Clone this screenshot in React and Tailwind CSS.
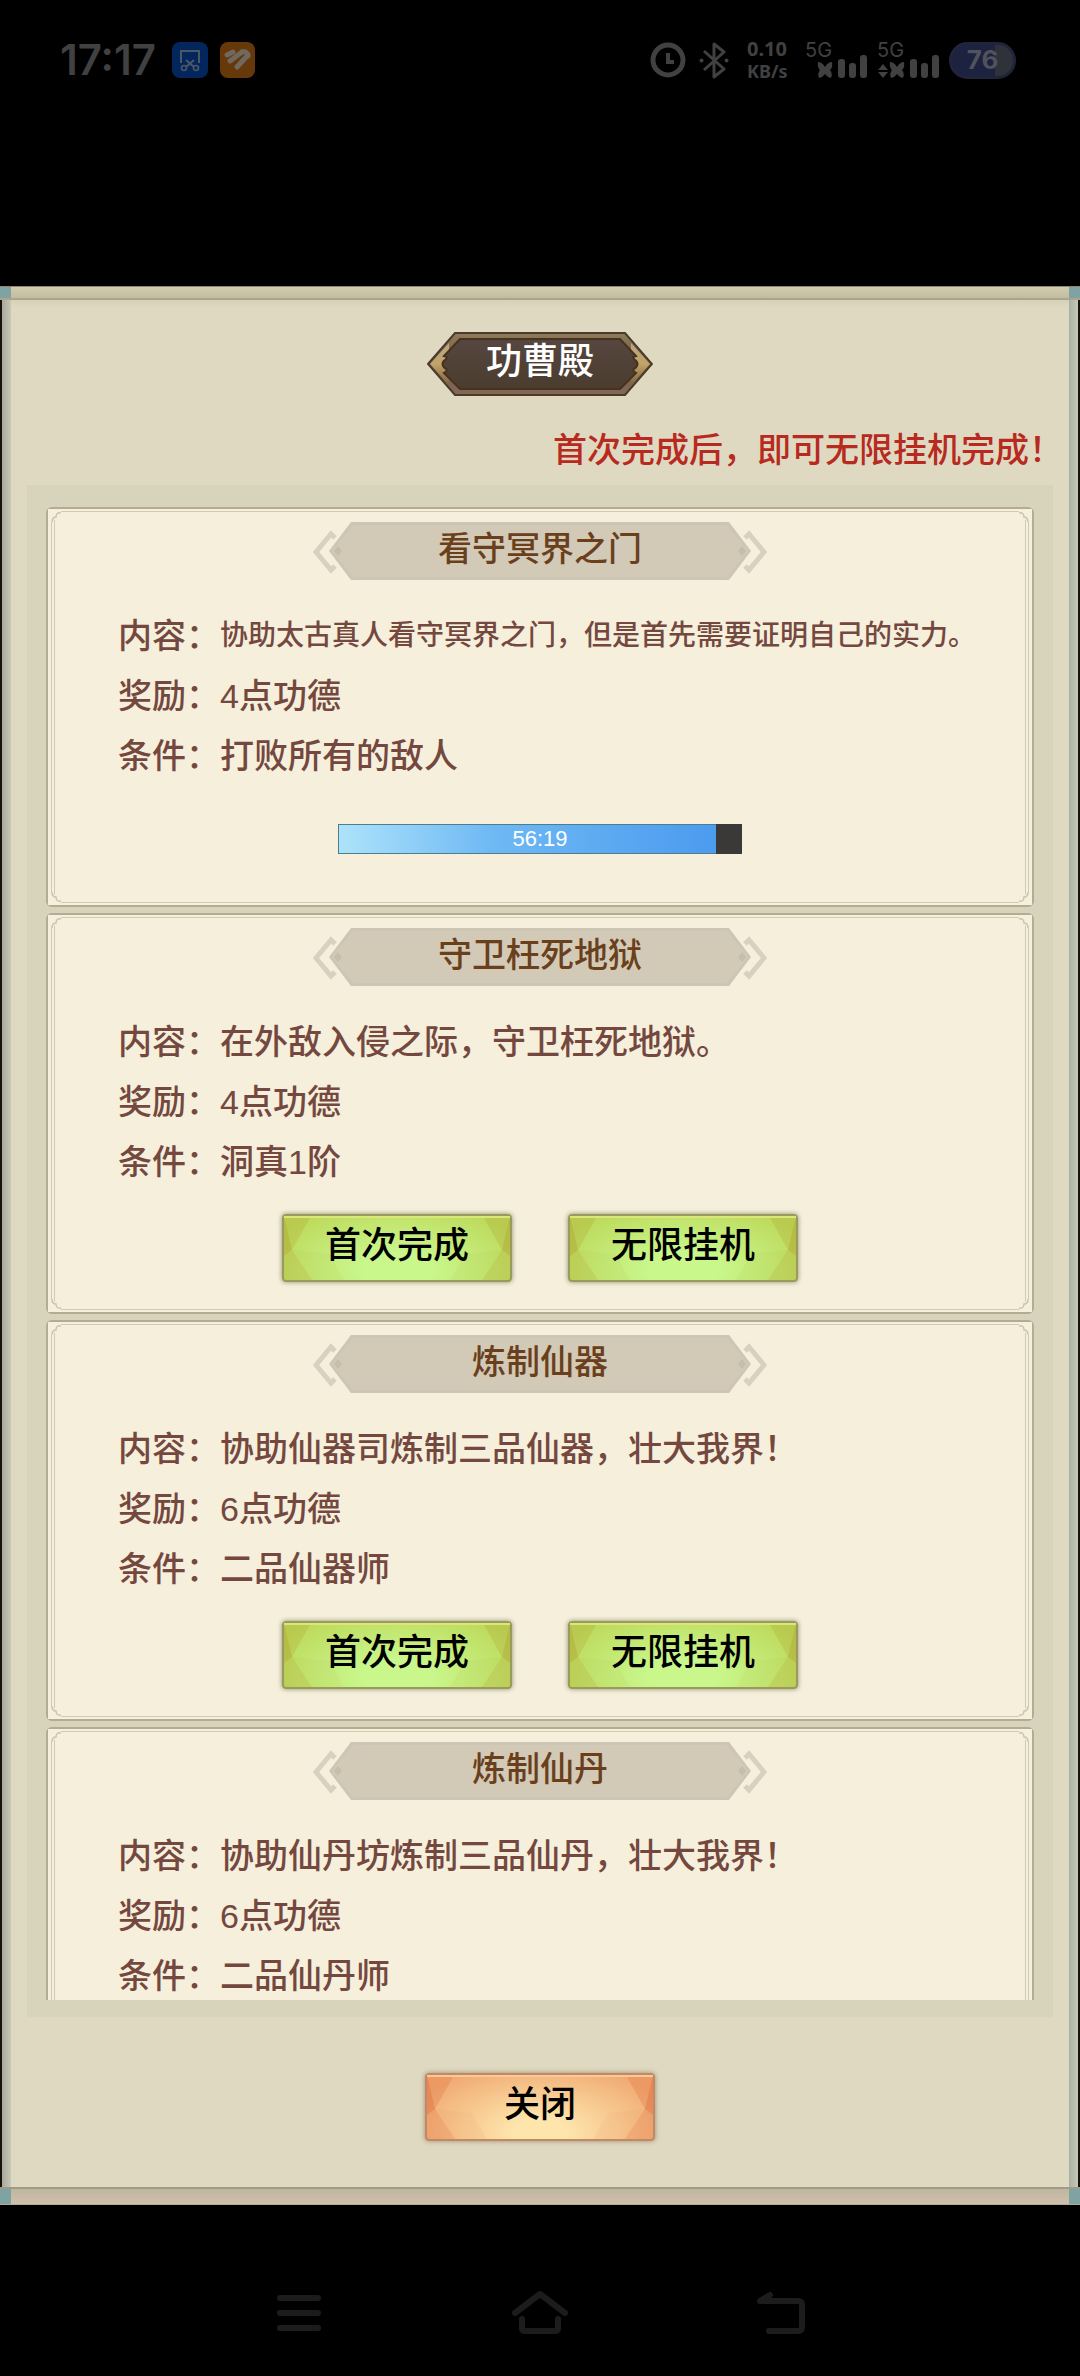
import React from 'react';

const tasks = [
  {
    title: '看守冥界之门',
    content: '协助太古真人看守冥界之门，但是首先需要证明自己的实力。',
    compact: true,
    reward: '4点功德',
    condition: '打败所有的敌人',
    progress: { left: '56:19', percent: 93.5 },
  },
  {
    title: '守卫枉死地狱',
    content: '在外敌入侵之际，守卫枉死地狱。',
    reward: '4点功德',
    condition: '洞真1阶',
  },
  {
    title: '炼制仙器',
    content: '协助仙器司炼制三品仙器，壮大我界！',
    reward: '6点功德',
    condition: '二品仙器师',
  },
  {
    title: '炼制仙丹',
    content: '协助仙丹坊炼制三品仙丹，壮大我界！',
    reward: '6点功德',
    condition: '二品仙丹师',
  },
];

const Signal = ({ arrows }) => (
  <svg width="64" height="38" viewBox="0 0 64 38" fill="currentColor">
    <text x="0" y="16" fontSize="20" fontFamily="Inter, sans-serif">5G</text>
    {arrows && <path d="M1 29l5-6 5 6zM1 31l5 6 5-6z" />}
    <path d="M13 21q4 0 7 5q3-5 7-5q1 5-2 8q3 4 1 8q-4-1-6-4q-2 3-6 4q-2-4 1-8q-3-3-2-8z" />
    <rect x="33" y="18" width="7" height="19" rx="3" />
    <rect x="44" y="22" width="7" height="15" rx="3" />
    <rect x="55" y="14" width="7" height="23" rx="3" />
  </svg>
);

const StatusBar = () => (
  <header className="flex shrink-0 items-start justify-between bg-black pt-10 pr-16 pb-[206px] pl-[60px] text-[#414141]">
    <div className="flex h-10 items-center">
      <span className="w-28 font-['Inter','Liberation_Sans',sans-serif] text-[42px] leading-10 font-semibold">17:17</span>
      <svg className="mr-3" width="36" height="36" viewBox="0 0 36 36" fill="none">
        <rect width="36" height="36" rx="8" fill="#03275c" />
        <path d="M9 21V9h18v12" stroke="#4d5764" strokeWidth="2" />
        <path d="M14 18l8 7M22 18l-8 7" stroke="#4d5764" strokeWidth="2" />
        <circle cx="12" cy="26" r="2.5" stroke="#4d5764" strokeWidth="1.6" />
        <circle cx="24" cy="26" r="2.5" stroke="#4d5764" strokeWidth="1.6" />
      </svg>
      <svg width="35" height="36" viewBox="0 0 35 36" fill="none" strokeLinecap="round">
        <rect width="35" height="36" rx="8" fill="#66380a" />
        <path d="M7 13l6-3M10 19L22 10M17 25L28 13" stroke="#71685f" strokeWidth="5" />
        <path d="M22 10q6-1 6 4" stroke="#71685f" strokeWidth="5" />
      </svg>
    </div>
    <div className="flex h-10 items-center">
      <svg className="mr-3" width="37" height="37" viewBox="0 0 37 37" fill="none" stroke="currentColor">
        <circle cx="18" cy="18" r="15" strokeWidth="5" />
        <path d="M18 11v9h6" strokeWidth="4" />
      </svg>
      <svg className="mr-[18px]" width="30" height="37" viewBox="0 0 30 37" fill="none" stroke="currentColor">
        <path d="M5 9l20 18-10 8V2l10 8L5 28" strokeWidth="3" strokeLinejoin="round" />
        <circle cx="2.5" cy="18.500" r="2" fill="currentColor" stroke="none" />
        <circle cx="27.500" cy="18.500" r="2" fill="currentColor" stroke="none" />
      </svg>
      <span className="mr-4 flex w-[42px] flex-col font-['Noto_Sans',sans-serif] leading-[22px] font-bold">
        <span className="text-[20px]">0.10</span>
        <span className="text-[18px]">KB/s</span>
      </span>
      <span className="mr-2"><Signal /></span>
      <span className="mr-2"><Signal arrows /></span>
      <span className="flex h-[37px] w-[67px] items-center justify-center rounded-full border-[3px] border-[#20253a] bg-[linear-gradient(90deg,#1c2240_70%,#30323a_70%)] font-['Inter',sans-serif] text-[26px] leading-7 font-bold text-[#50535c]">
        76
      </span>
    </div>
  </header>
);

const TitleBadge = ({ children }) => (
  <h1 className="relative flex h-16 w-[226px] items-center justify-center pb-1 text-[36px] leading-10 font-medium text-white">
    <svg className="absolute inset-0" width="226" height="64" viewBox="0 0 226 64">
      <defs>
        <linearGradient id="badge-rim" x1="0" y1="0" x2="0" y2="1">
          <stop offset="0" stopColor="#8d7b5c" />
          <stop offset="0.5" stopColor="#6f5a3c" />
          <stop offset="1" stopColor="#84695a" />
        </linearGradient>
        <linearGradient id="badge-gold" x1="0" y1="0" x2="0" y2="1">
          <stop offset="0" stopColor="#b9a684" />
          <stop offset="0.5" stopColor="#c0a468" />
          <stop offset="1" stopColor="#7d6240" />
        </linearGradient>
        <linearGradient id="badge-core" x1="0" y1="0" x2="0" y2="1">
          <stop offset="0" stopColor="#564640" />
          <stop offset="1" stopColor="#4a3d2e" />
        </linearGradient>
      </defs>
      <path d="M1 32L28 1H198L225 32L198 63H28Z" fill="url(#badge-rim)" stroke="#4a3a2a" strokeWidth="2" />
      <path d="M3 32L22 11V53ZM223 32L204 11V53Z" fill="url(#badge-gold)" />
      <path d="M33 7H193L209 24Q205 25 207 27Q214 32 207 37Q205 39 209 41L193 57H33L17 41Q21 39 19 37Q12 32 19 27Q21 25 17 24Z" fill="url(#badge-core)" stroke="#48321f" strokeWidth="2" />
    </svg>
    <span className="relative">{children}</span>
  </h1>
);

const Ribbon = ({ children }) => (
  <h2 className="relative mx-auto flex h-[58px] w-[454px] items-center justify-center pb-1 text-[34px] leading-[50px] font-medium text-[#6a3f1c]">
    <svg className="absolute inset-0" width="454" height="58" viewBox="0 0 454 58">
      <path d="M16 29L38 0H416L438 29L416 58H38Z" fill="#cdc6b4" />
      <path d="M19 29L40 3H414L435 29L414 55H40Z" fill="#d2c9b7" />
      <path d="M25 24l4 5-4 5-4-5zM429 24l4 5-4 5-4-5z" fill="#c6beab" />
      <path d="M22 16L18 12L3 30L18 48L22 44M432 16L436 12L451 30L436 48L432 44" fill="none" stroke="#d8d1bf" strokeWidth="5" />
    </svg>
    <span className="relative">{children}</span>
  </h2>
);

const Corner = ({ className }) => (
  <svg className={`absolute ${className}`} width="13" height="13" viewBox="0 0 13 13" fill="none">
    <path d="M0 0H13V4L4 13H0Z" fill="#f6efdc" />
    <path d="M13 4Q8 3 8 8Q4 8 4 13" stroke="#cbc3ac" strokeWidth="1.5" />
  </svg>
);

const greenTheme = {
  box: 'border-[#9a9a5c] bg-[radial-gradient(ellipse_60%_110%_at_50%_85%,#c9f78c_25%,#bdd95a_100%)] shadow-[0_0_5px_#8f8f6c]',
  shade: '#b0a030',
  top: '#d9e878',
};

const orangeTheme = {
  box: 'border-[#c08a66] bg-[radial-gradient(ellipse_60%_110%_at_50%_90%,#fde5ac_20%,#f0aa72_100%)] shadow-[0_0_5px_#a08a70]',
  shade: '#e0683c',
  top: '#fbc898',
};

const GameButton = ({ theme = greenTheme, children }) => (
  <button
    type="button"
    className={`relative flex h-[68px] w-[230px] items-center justify-center rounded-sm border-2 pb-1 text-[36px] leading-10 font-medium text-black ${theme.box}`}
  >
    <svg className="absolute inset-0 h-full w-full" viewBox="0 0 226 64" preserveAspectRatio="none">
      <path d="M0 0H27L8 34L28 64H0ZM226 0H199L218 34L198 64H226Z" fill={theme.shade} opacity="0.25" />
      <path d="M0 0L8 34L0 40ZM226 0L218 34L226 40Z" fill={theme.shade} opacity="0.35" />
      <path d="M8 34L45 38L60 64H28ZM218 34L181 38L166 64H198Z" fill={theme.shade} opacity="0.06" />
      <path d="M0 1H226" stroke={theme.top} strokeWidth="2" />
    </svg>
    <span className="relative">{children}</span>
  </button>
);

const ProgressBar = ({ left, percent }) => (
  <div
    role="progressbar"
    aria-label="剩余时间"
    aria-valuenow={percent}
    className="relative mx-auto mt-[38px] h-[30px] w-[404px] bg-[#3b3937]"
  >
    <div
      className="h-full border-y border-l border-[#4f7d8c] bg-linear-to-r from-[#ade3fa] via-[#6fb9f4] via-40% to-[#4b9bef]"
      style={{ width: `${percent}%` }}
    />
    <span className="absolute inset-0 text-center text-[22px] leading-[30px] text-white">{left}</span>
  </div>
);

const Row = ({ label, compact, children }) => (
  <div className="flex h-[60px] items-center leading-[60px]">
    <dt className="w-[102px] shrink-0">{label}：</dt>
    <dd className={compact ? 'text-[28px] whitespace-nowrap' : ''}>{children}</dd>
  </div>
);

const TaskCard = ({ task }) => (
  <article className="relative min-h-[400px] shrink-0 rounded-md border-2 border-[#b3ab93] bg-[#f5efdc] pt-[13px] pb-[30px]">
    <div className="absolute inset-x-[3px] inset-y-[2px] border-x-4 border-y border-[#d2cab3] [border-left-style:double] [border-right-style:double]" />
    <Corner className="top-0 left-0" />
    <Corner className="top-0 right-0 -scale-x-100" />
    <Corner className="bottom-0 left-0 -scale-y-100" />
    <Corner className="right-0 bottom-0 rotate-180" />
    <div className="relative">
      <Ribbon>{task.title}</Ribbon>
      <dl className="mt-[26px] pl-[70px] text-[34px] font-medium text-[#74483f]">
        <Row label="内容" compact={task.compact}>{task.content}</Row>
        <Row label="奖励">{task.reward}</Row>
        <Row label="条件">{task.condition}</Row>
      </dl>
      {task.progress ? (
        <ProgressBar {...task.progress} />
      ) : (
        <div className="mt-[22px] flex justify-center gap-14">
          <GameButton>首次完成</GameButton>
          <GameButton>无限挂机</GameButton>
        </div>
      )}
    </div>
  </article>
);

const NavBar = () => (
  <nav className="flex h-[171px] shrink-0 items-start justify-center gap-[188px] bg-black pt-[84px] text-[#1c1c1c]">
    <button type="button" aria-label="菜单">
      <svg width="48" height="48" viewBox="0 0 48 48" stroke="currentColor" strokeWidth="6" strokeLinecap="round">
        <path d="M5 9H43M5 24H43M5 39H43" />
      </svg>
    </button>
    <button type="button" aria-label="主页">
      <svg width="58" height="48" viewBox="0 0 58 48" fill="none" stroke="currentColor" strokeWidth="6" strokeLinecap="round" strokeLinejoin="round">
        <path d="M4 24L29 5L54 24M11 30V39Q11 42 14 42H44Q47 42 47 39V30" />
      </svg>
    </button>
    <button type="button" aria-label="返回">
      <svg width="48" height="48" viewBox="0 0 48 48" fill="none" stroke="currentColor" strokeWidth="6" strokeLinecap="round" strokeLinejoin="round">
        <path d="M12 42H41Q45 42 45 38V16Q45 12 41 12H3L13 6" />
      </svg>
    </button>
  </nav>
);

const App = () => {
  return (
    <div className="flex h-screen flex-col bg-black font-['Liberation_Sans','Noto_Sans_CJK_SC',sans-serif]">
      <StatusBar />

      <main className="flex min-h-0 flex-1 flex-col">
        <div className="flex h-3 shrink-0 justify-between border-t border-[#8f8672] bg-linear-to-b from-[#d3cdb0] to-[#c2bc9f]">
          <div className="w-[11px] bg-[#7fa3a3]" />
          <div className="w-[11px] bg-[#7fa3a3]" />
        </div>

        <div className="flex min-h-0 flex-1 border-t-2 border-[#aaa58f]">
          <div className="w-[11px] shrink-0 border-l-2 border-[#17120d] bg-linear-to-r from-[#a9a99c] to-[#c6c8b6]" />
          <div className="flex min-w-0 flex-1 flex-col items-center bg-[#ded9c0] bg-linear-to-b from-[#d6d1b8] to-[#ded9c0] to-[8px] pt-8 pb-[46px]">
            <TitleBadge>功曹殿</TitleBadge>
            <p className="mt-[34px] mb-[15px] self-end pr-[6px] text-[34px] leading-10 font-medium text-[#b82a20]">
              首次完成后，即可无限挂机完成！
            </p>
            <div className="flex min-h-0 flex-1 self-stretch px-4">
              <section className="flex min-h-0 flex-1 flex-col bg-[#d8d3bb] px-[19px] pt-[22px] pb-[17px]">
                <div className="flex min-h-0 flex-1 flex-col gap-[6px] overflow-y-auto [scrollbar-width:none]">
                  {tasks.map((task) => (
                    <TaskCard key={task.title} task={task} />
                  ))}
                </div>
              </section>
            </div>
            <div className="mt-14">
              <GameButton theme={orangeTheme}>关闭</GameButton>
            </div>
          </div>
          <div className="w-[11px] shrink-0 border-r-2 border-[#17120d] bg-linear-to-r from-[#a9b0a4] to-[#c6c8b6]" />
        </div>

        <div className="flex h-[18px] shrink-0 justify-between border-t-2 border-b border-t-[#a09b86] border-b-[#b5ac98] bg-linear-to-b from-[#bfb7a0] to-[#d0bfab]">
          <div className="w-[11px] bg-[#7fa3a3]" />
          <div className="w-[11px] bg-[#7fa3a3]" />
        </div>
      </main>

      <NavBar />
    </div>
  );
};

export default App;
